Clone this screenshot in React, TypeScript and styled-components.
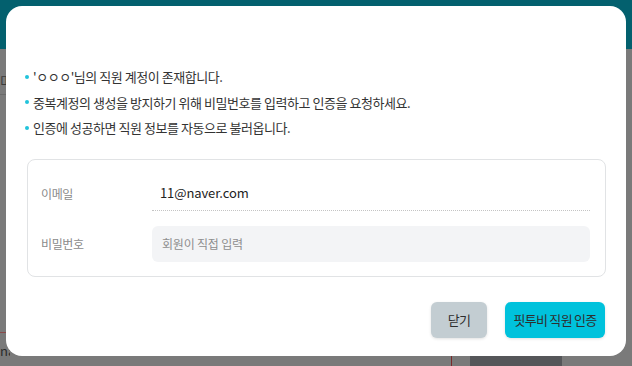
import React from "react";
import styled, { createGlobalStyle } from "styled-components";

const Global = createGlobalStyle`
  html, body { margin: 0; padding: 0; width: 632px; height: 366px; overflow: hidden; }
  body { font-family: "Noto Sans CJK KR", "Noto Sans", sans-serif; }
  * { box-sizing: border-box; }
`;

const Page = styled.div`
  width: 632px;
  height: 366px;
  display: flex;
  flex-direction: column;
  background: #7a7a7a;
`;

const Header = styled.div`
  height: 49px;
  background: #03606e;
  flex: none;
`;

const Body = styled.div`
  flex: 1;
  display: flex;
  flex-direction: column;
  justify-content: space-between;
  padding-top: 22px;
`;

const SideLabel = styled.div`
  width: 8px;
  overflow: hidden;
  font-size: 13px;
  color: #3a3a3a;
  border-bottom: 1px solid #6a6a6a;
  padding-bottom: 4px;
  white-space: nowrap;
`;

const BottomRow = styled.div`
  display: flex;
  align-items: flex-end;
  height: 34px;
`;

const BottomText = styled.div`
  width: 10px;
  overflow: hidden;
  font-size: 13px;
  color: #2a2a2a;
  white-space: nowrap;
  border-top: 1px solid #8a4a4a;
  padding-top: 8px;
  margin-right: 441px;
  align-self: flex-start;
`;

const RedLine = styled.div`
  width: 1px;
  height: 16px;
  background: #7a2a2a;
  margin-right: 18px;
`;

const DarkBox = styled.div`
  width: 92px;
  height: 10px;
  background: #555659;
`;

const Overlay = styled.div`
  position: fixed;
  inset: 0;
  display: flex;
  align-items: flex-start;
  justify-content: flex-start;
  padding: 6px 0 0 6px;
`;

const Modal = styled.div`
  width: 620px;
  height: 350px;
  background: #ffffff;
  border-radius: 16px;
  padding: 58px 20px 0 19px;
  display: flex;
  flex-direction: column;
`;

const Notes = styled.ul`
  list-style: none;
  margin: 0;
  padding: 0;
`;

const Note = styled.li`
  display: flex;
  align-items: center;
  height: 25.5px;
  font-size: 13px;
  color: #333333;
  letter-spacing: -0.45px;
  &::before {
    content: "";
    width: 4px;
    height: 4px;
    border-radius: 50%;
    background: #22c3db;
    margin-right: 4px;
    flex: none;
  }
`;

const Card = styled.div`
  margin: 18px 0 0 2px;
  border: 1px solid #e1e3e5;
  border-radius: 8px;
  padding: 16px 15px 14px 13px;
  display: flex;
  flex-direction: column;
  gap: 15px;
`;

const Row = styled.div`
  display: grid;
  grid-template-columns: 111px 1fr;
  align-items: center;
`;

const Label = styled.div`
  font-size: 12px;
  letter-spacing: -0.4px;
  color: #8a8a8a;
`;

const StaticValue = styled.div`
  height: 35px;
  display: flex;
  align-items: center;
  padding-left: 8px;
  font-size: 13px;
  color: #222222;
  letter-spacing: -0.1px;
  border-bottom: 1px dotted #c4c4c4;
`;

const PasswordInput = styled.input`
  height: 36px;
  border: none;
  outline: none;
  border-radius: 6px;
  background: #f3f4f6;
  padding: 0 10px;
  font-family: inherit;
  font-size: 12px;
  letter-spacing: -0.2px;
  color: #333;
  &::placeholder { color: #8e8e8e; }
`;

const Actions = styled.div`
  margin-top: 25px;
  display: flex;
  justify-content: flex-end;
  gap: 18px;
  padding-right: 1px;
`;

const Button = styled.button<{ $primary?: boolean }>`
  height: 36px;
  width: ${(p) => (p.$primary ? "100px" : "56px")};
  padding: 0;
  border: none;
  border-radius: 6px;
  background: ${(p) => (p.$primary ? "#00c2dc" : "#c3cdd2")};
  color: #2e2e2e;
  font-family: inherit;
  font-size: 13px;
  letter-spacing: -0.7px;
  white-space: nowrap;
  box-shadow: 0 1px 3px rgba(0, 0, 0, 0.12);
  cursor: pointer;
`;

export default function App() {
  return (
    <>
      <Global />
      <Page>
        <Header />
        <Body>
          <SideLabel>미</SideLabel>
          <BottomRow>
            <BottomText>na</BottomText>
            <RedLine />
            <DarkBox />
          </BottomRow>
        </Body>
      </Page>
      <Overlay>
        <Modal>
          <Notes>
            <Note>'ㅇㅇㅇ'님의 직원 계정이 존재합니다.</Note>
            <Note>중복계정의 생성을 방지하기 위해 비밀번호를 입력하고 인증을 요청하세요.</Note>
            <Note>인증에 성공하면 직원 정보를 자동으로 불러옵니다.</Note>
          </Notes>
          <Card>
            <Row>
              <Label>이메일</Label>
              <StaticValue>11@naver.com</StaticValue>
            </Row>
            <Row>
              <Label>비밀번호</Label>
              <PasswordInput type="password" placeholder="회원이 직접 입력" />
            </Row>
          </Card>
          <Actions>
            <Button>닫기</Button>
            <Button $primary>핏투비 직원 인증</Button>
          </Actions>
        </Modal>
      </Overlay>
    </>
  );
}
